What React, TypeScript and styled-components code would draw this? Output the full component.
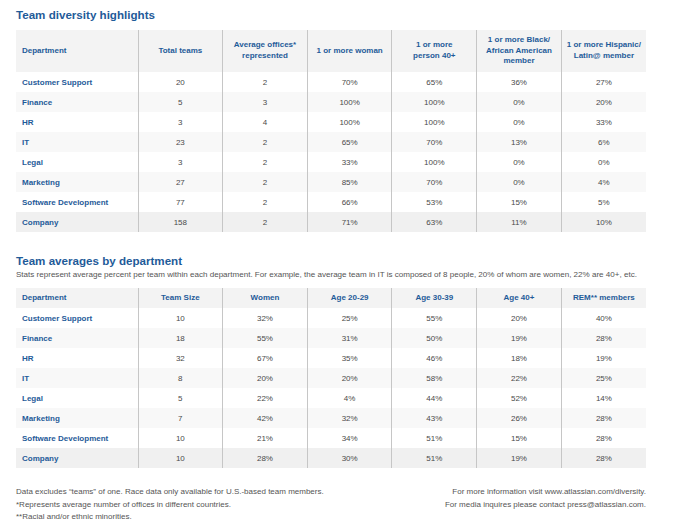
import React from "react";
import styled, { createGlobalStyle } from "styled-components";

const Global = createGlobalStyle`
  html, body { margin: 0; padding: 0; background: #ffffff; }
  body { font-family: "Liberation Sans", Arial, Helvetica, sans-serif; }
`;

const Page = styled.div`
  width: 680px;
  height: 526px;
  box-sizing: border-box;
  padding: 8px 0 0 16px;
  overflow: hidden;
`;

const Title = styled.h2<{ $top?: number }>`
  margin: ${(p) => p.$top ?? 0}px 0 0 0;
  font-size: 11.6px;
  line-height: 14px;
  font-weight: 700;
  color: #1f5b99;
`;

const Subtitle = styled.p`
  margin: 2px 0 0 0;
  font-size: 8.05px;
  line-height: 10px;
  color: #555555;
  white-space: nowrap;
`;

const Table = styled.table<{ $top: number }>`
  margin-top: ${(p) => p.$top}px;
  width: 630px;
  border-collapse: collapse;
  table-layout: fixed;
`;

const HeadRow = styled.tr<{ $h: number }>`
  height: ${(p) => p.$h}px;
  background: #f3f3f3;
`;

const Row = styled.tr<{ $shade: "none" | "alt" | "total" }>`
  height: 20px;
  background: ${(p) =>
    p.$shade === "alt" ? "#f8f8f8" : p.$shade === "total" ? "#f0f0f0" : "#ffffff"};
`;

const Th = styled.th<{ $first?: boolean }>`
  padding: 0 4px;
  padding-left: ${(p) => (p.$first ? "6px" : "4px")};
  text-align: ${(p) => (p.$first ? "left" : "center")};
  font-size: 8px;
  line-height: 10.8px;
  font-weight: 700;
  color: #1f5b99;
  border-left: ${(p) => (p.$first ? "none" : "1px solid #c6c6c6")};
  vertical-align: middle;
`;

const DeptCell = styled.td`
  padding: 0 0 0 6px;
  text-align: left;
  font-size: 8px;
  font-weight: 700;
  color: #1f5b99;
  white-space: nowrap;
`;

const Cell = styled.td`
  padding: 0;
  text-align: center;
  font-size: 8px;
  color: #4a4a4a;
  border-left: 1px solid #c6c6c6;
`;

const Footer = styled.div`
  margin-top: 18px;
  width: 630px;
  display: flex;
  justify-content: space-between;
  font-size: 8px;
  line-height: 12.5px;
  color: #555555;
`;

const FootCol = styled.div<{ $right?: boolean }>`
  display: flex;
  flex-direction: column;
  align-items: ${(p) => (p.$right ? "flex-end" : "flex-start")};
  white-space: nowrap;
`;

type Line = string[];

const diversityHead = [
  "Department",
  "Total teams",
  "Average offices*\nrepresented",
  "1 or more woman",
  "1 or more\nperson 40+",
  "1 or more Black/\nAfrican American\nmember",
  "1 or more Hispanic/\nLatin@ member",
];

const diversityRows: Line[] = [
  ["Customer Support", "20", "2", "70%", "65%", "36%", "27%"],
  ["Finance", "5", "3", "100%", "100%", "0%", "20%"],
  ["HR", "3", "4", "100%", "100%", "0%", "33%"],
  ["IT", "23", "2", "65%", "70%", "13%", "6%"],
  ["Legal", "3", "2", "33%", "100%", "0%", "0%"],
  ["Marketing", "27", "2", "85%", "70%", "0%", "4%"],
  ["Software Development", "77", "2", "66%", "53%", "15%", "5%"],
  ["Company", "158", "2", "71%", "63%", "11%", "10%"],
];

const averagesHead = [
  "Department",
  "Team Size",
  "Women",
  "Age 20-29",
  "Age 30-39",
  "Age 40+",
  "REM** members",
];

const averagesRows: Line[] = [
  ["Customer Support", "10", "32%", "25%", "55%", "20%", "40%"],
  ["Finance", "18", "55%", "31%", "50%", "19%", "28%"],
  ["HR", "32", "67%", "35%", "46%", "18%", "19%"],
  ["IT", "8", "20%", "20%", "58%", "22%", "25%"],
  ["Legal", "5", "22%", "4%", "44%", "52%", "14%"],
  ["Marketing", "7", "42%", "32%", "43%", "26%", "28%"],
  ["Software Development", "10", "21%", "34%", "51%", "15%", "28%"],
  ["Company", "10", "28%", "30%", "51%", "19%", "28%"],
];

function DataTable({ head, rows, headHeight, top }: { head: string[]; rows: Line[]; headHeight: number; top: number }) {
  return (
    <Table $top={top}>
      <colgroup>
        <col style={{ width: 122 }} />
        {head.slice(1).map((_, i) => (
          <col key={i} />
        ))}
      </colgroup>
      <thead>
        <HeadRow $h={headHeight}>
          {head.map((h, i) => (
            <Th key={i} $first={i === 0}>
              {h.split("\n").map((part, j) => (
                <React.Fragment key={j}>
                  {j > 0 && <br />}
                  {part}
                </React.Fragment>
              ))}
            </Th>
          ))}
        </HeadRow>
      </thead>
      <tbody>
        {rows.map((r, i) => (
          <Row key={i} $shade={i === rows.length - 1 ? "total" : i % 2 === 1 ? "alt" : "none"}>
            <DeptCell>{r[0]}</DeptCell>
            {r.slice(1).map((v, j) => (
              <Cell key={j}>{v}</Cell>
            ))}
          </Row>
        ))}
      </tbody>
    </Table>
  );
}

export default function App() {
  return (
    <>
      <Global />
      <Page>
        <Title>Team diversity highlights</Title>
        <DataTable head={diversityHead} rows={diversityRows} headHeight={42} top={8} />
        <Title $top={22}>Team averages by department</Title>
        <Subtitle>
          Stats represent average percent per team within each department. For example, the average team in IT is composed of 8 people, 20% of whom are women, 22% are 40+, etc.
        </Subtitle>
        <DataTable head={averagesHead} rows={averagesRows} headHeight={20} top={8} />
        <Footer>
          <FootCol>
            <span>Data excludes “teams” of one. Race data only available for U.S.-based team members.</span>
            <span>*Represents average number of offices in different countries.</span>
            <span>**Racial and/or ethnic minorities.</span>
          </FootCol>
          <FootCol $right>
            <span>For more information visit www.atlassian.com/diversity.</span>
            <span>For media inquires please contact press@atlassian.com.</span>
          </FootCol>
        </Footer>
      </Page>
    </>
  );
}
